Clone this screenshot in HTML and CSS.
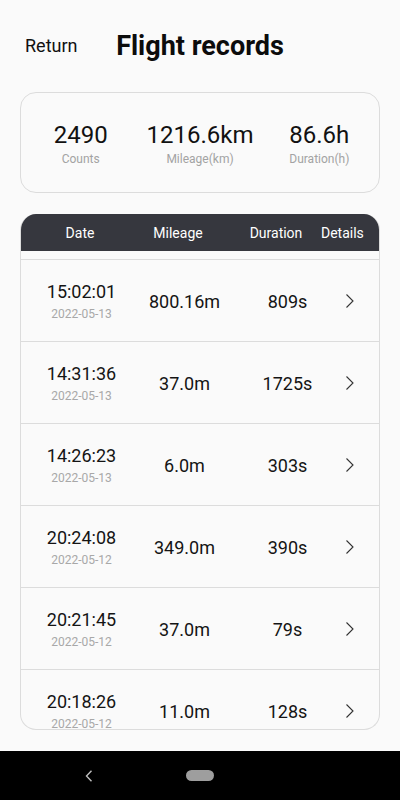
FILE: index.html
```html
<!DOCTYPE html>
<html lang="en">
<head>
<meta charset="utf-8">
<title>Flight records</title>
<link rel="stylesheet" href="styles.css">
</head>
<body>
<div class="screen">
  <main class="main">
    <header class="topbar">
      <span class="back">Return</span>
      <h1 class="title">Flight records</h1>
      <span></span>
    </header>

    <section class="summary">
      <div class="stat"><div class="stat-num">2490</div><div class="stat-label">Counts</div></div>
      <div class="stat"><div class="stat-num">1216.6km</div><div class="stat-label">Mileage(km)</div></div>
      <div class="stat"><div class="stat-num">86.6h</div><div class="stat-label">Duration(h)</div></div>
    </section>

    <section class="table">
      <div class="thead">
        <span class="th">Date</span>
        <span class="th">Mileage</span>
        <span class="th th-dur">Duration</span>
        <span class="th th-det">Details</span>
      </div>
      <div class="tbody">
        <div class="scroll-edge"></div>
        <div class="row">
          <div class="c-date"><div class="time">15:02:01</div><div class="day">2022-05-13</div></div>
          <div class="c-mil">800.16m</div>
          <div class="c-dur">809s</div>
          <div class="c-go"><svg class="chev" width="16" height="16" viewBox="0 0 16 16"><path d="M4.5 1.5 L11 8 L4.5 14.5" /></svg></div>
        </div>
        <div class="row">
          <div class="c-date"><div class="time">14:31:36</div><div class="day">2022-05-13</div></div>
          <div class="c-mil">37.0m</div>
          <div class="c-dur">1725s</div>
          <div class="c-go"><svg class="chev" width="16" height="16" viewBox="0 0 16 16"><path d="M4.5 1.5 L11 8 L4.5 14.5" /></svg></div>
        </div>
        <div class="row">
          <div class="c-date"><div class="time">14:26:23</div><div class="day">2022-05-13</div></div>
          <div class="c-mil">6.0m</div>
          <div class="c-dur">303s</div>
          <div class="c-go"><svg class="chev" width="16" height="16" viewBox="0 0 16 16"><path d="M4.5 1.5 L11 8 L4.5 14.5" /></svg></div>
        </div>
        <div class="row">
          <div class="c-date"><div class="time">20:24:08</div><div class="day">2022-05-12</div></div>
          <div class="c-mil">349.0m</div>
          <div class="c-dur">390s</div>
          <div class="c-go"><svg class="chev" width="16" height="16" viewBox="0 0 16 16"><path d="M4.5 1.5 L11 8 L4.5 14.5" /></svg></div>
        </div>
        <div class="row">
          <div class="c-date"><div class="time">20:21:45</div><div class="day">2022-05-12</div></div>
          <div class="c-mil">37.0m</div>
          <div class="c-dur">79s</div>
          <div class="c-go"><svg class="chev" width="16" height="16" viewBox="0 0 16 16"><path d="M4.5 1.5 L11 8 L4.5 14.5" /></svg></div>
        </div>
        <div class="row">
          <div class="c-date"><div class="time">20:18:26</div><div class="day">2022-05-12</div></div>
          <div class="c-mil">11.0m</div>
          <div class="c-dur">128s</div>
          <div class="c-go"><svg class="chev" width="16" height="16" viewBox="0 0 16 16"><path d="M4.5 1.5 L11 8 L4.5 14.5" /></svg></div>
        </div>
      </div>
    </section>
  </main>

  <nav class="navbar">
    <svg class="nav-back" width="8" height="12" viewBox="0 0 8 12"><path d="M6.5 0.8 L1.5 6 L6.5 11.2" /></svg>
    <span class="nav-home"></span>
  </nav>
</div>
</body>
</html>
```

FILE: styles.css
```css
* { box-sizing: border-box; }

html, body {
  margin: 0;
  padding: 0;
  background: #fafafa;
}

body {
  font-family: Roboto, "Liberation Sans", Arial, sans-serif;
  color: #141414;
}

.screen {
  width: 400px;
  height: 800px;
  display: flex;
  flex-direction: column;
  overflow: hidden;
}

.main {
  flex: 1;
  min-height: 0;
  display: flex;
  flex-direction: column;
  padding: 0 20px 21px;
}

/* top bar */
.topbar {
  height: 92px;
  display: grid;
  grid-template-columns: 1fr auto 1fr;
  align-items: center;
  margin: 0 -20px;
}

.back {
  padding-left: 25px;
  font-size: 18px;
  line-height: 24px;
  color: #111;
}

.title {
  margin: 0;
  font-size: 27px;
  line-height: 32px;
  font-weight: 700;
  color: #0c0c0c;
}

/* summary card */
.summary {
  height: 101px;
  border: 1px solid #dcdcdc;
  border-radius: 16px;
  display: grid;
  grid-template-columns: 1fr 1fr 1fr;
  align-items: center;
  padding-top: 2px;
}

.stat {
  text-align: center;
}

.stat-num {
  font-size: 24px;
  line-height: 28px;
  color: #111;
}

.stat-label {
  margin-top: 2px;
  font-size: 12px;
  line-height: 16px;
  color: #a3a3a3;
}

/* table */
.table {
  flex: 1;
  min-height: 0;
  margin-top: 21px;
  border: 1px solid #dcdcdc;
  border-top: none;
  border-radius: 16px;
  overflow: hidden;
  display: flex;
  flex-direction: column;
}

.thead {
  height: 37px;
  flex: none;
  background: #36373e;
  margin: 0 -1px;
  display: grid;
  grid-template-columns: 120px 76px 105px 1fr;
  align-items: center;
  color: #fff;
  font-size: 14px;
}

.th {
  text-align: center;
}

.th-dur {
  padding-left: 15px;
}

.th-det {
  text-align: left;
}

.tbody {
  flex: 1;
  min-height: 0;
  overflow: hidden;
}

.scroll-edge {
  height: 9px;
  border-bottom: 1px solid #dcdcdc;
}

.row {
  height: 82px;
  border-bottom: 1px solid #dcdcdc;
  display: grid;
  grid-template-columns: 121px 85px 115px 1fr;
  align-items: center;
  font-size: 18px;
  color: #141414;
}

.c-date {
  text-align: center;
}

.time {
  line-height: 22px;
}

.day {
  margin-top: 5px;
  font-size: 12px;
  line-height: 13px;
  color: #a8a8a8;
}

.c-mil {
  text-align: center;
  padding-top: 1px;
}

.c-dur {
  text-align: center;
  padding-left: 6px;
  padding-top: 1px;
}

.c-go {
  display: flex;
  align-items: center;
}

.chev {
  display: block;
}

.chev path {
  fill: none;
  stroke: #333;
  stroke-width: 1.1;
}

/* android nav bar */
.navbar {
  height: 49px;
  flex: none;
  background: #000;
  display: flex;
  align-items: center;
}

.nav-back {
  margin-left: 85px;
  display: block;
}

.nav-back path {
  fill: none;
  stroke: #bdbdbd;
  stroke-width: 1.4;
}

.nav-home {
  margin-left: 93px;
  width: 28px;
  height: 11px;
  border-radius: 6px;
  background: #9e9e9e;
}
```
